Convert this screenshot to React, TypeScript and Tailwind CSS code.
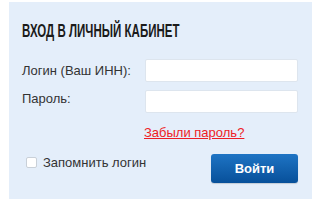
import React from "react";

export default function App() {
  return (
    <div className="w-[320px] h-[200px] bg-white pt-[2px] pl-[9px]" style={{ fontFamily: "Arial, 'Liberation Sans', sans-serif" }}>
      <div className="w-[303px] h-[197px] bg-[#e4eefa] pl-[13px] pr-[14px] pt-[19px]">
        <h1 className="text-[18px] leading-[20px] font-bold text-[#1b1b1b] whitespace-nowrap">
          <span className="inline-block origin-left scale-x-[0.64]">ВХОД В ЛИЧНЫЙ КАБИНЕТ</span>
        </h1>

        <div className="mt-[18px] flex items-center justify-between">
          <label className="text-[13px] text-[#333]">Логин (Ваш ИНН):</label>
          <input className="w-[153px] h-[23px] bg-white rounded-[2px] border border-[#dde5ee] outline-none" />
        </div>
        <div className="mt-[8px] flex items-center justify-between">
          <label className="text-[13px] text-[#333] -mt-[5px]">Пароль:</label>
          <input type="password" className="w-[153px] h-[23px] bg-white rounded-[2px] border border-[#dde5ee] outline-none" />
        </div>

        <div className="mt-[7px] pl-[122px]">
          <a href="#" className="text-[13px] text-[#ee1c25] underline">Забыли пароль?</a>
        </div>

        <div className="mt-[10px] flex items-start justify-between">
          <label className="mt-[1px] flex items-center gap-[6px] pl-[4px] text-[13px] leading-[15px] text-[#333]">
            <span className="w-[11px] h-[11px] bg-white border border-[#c9d0d8] rounded-[2px]" />
            Запомнить логин
          </label>
          <button className="w-[87px] h-[29px] rounded-[3px] bg-gradient-to-b from-[#1e74c4] to-[#07509a] text-white text-[13px] font-bold shadow-[0_1px_1px_rgba(0,0,0,0.15)]">
            Войти
          </button>
        </div>
      </div>
    </div>
  );
}
